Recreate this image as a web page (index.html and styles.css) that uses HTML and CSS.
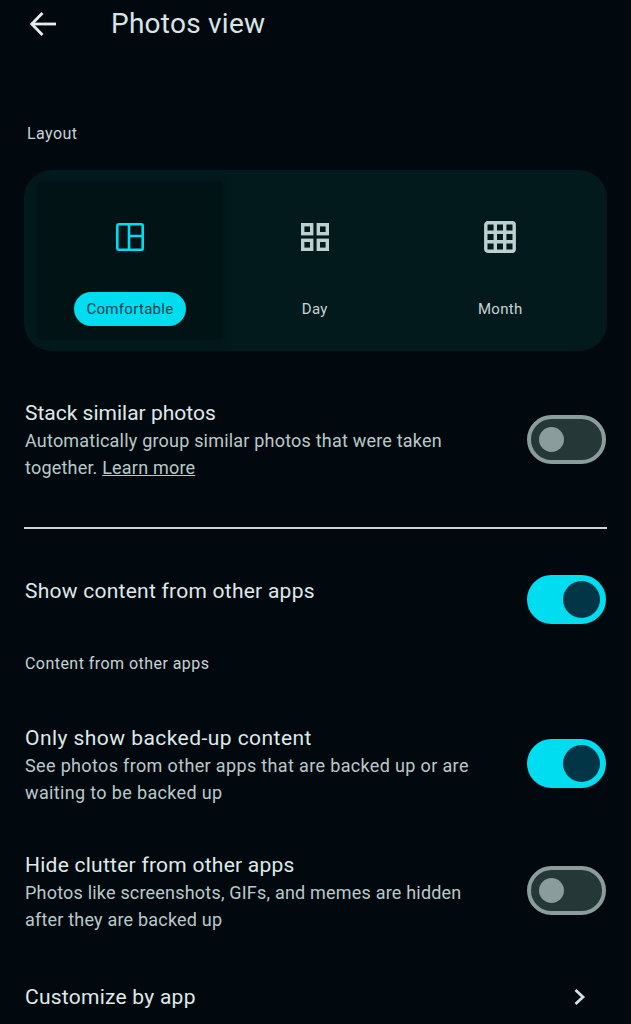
FILE: index.html
```html
<!DOCTYPE html>
<html lang="en">
<head>
    <meta charset="UTF-8">
    <meta name="viewport" content="width=device-width, initial-scale=1.0">
    <title>Photos view</title>
    <link rel="stylesheet" href="styles.css">
</head>
<body>
    <div class="topbar">
        <svg class="back" width="28" height="28" viewBox="0 0 28 28" fill="none" stroke="#e4eeee" stroke-width="2.8">
            <path d="M27 14H3"/>
            <path d="M13.5 3L2.8 14l10.7 11"/>
        </svg>
        <h1>Photos view</h1>
    </div>

    <div class="section-label first">Layout</div>

    <div class="layout-card">
        <div class="layout-option selected">
            <svg class="option-icon" width="32" height="32" viewBox="-1 -1 32 32" fill="none" stroke="#00dcf0" stroke-width="2.6">
                <rect x="2.3" y="2.3" width="25.4" height="25.4" rx="1.5"/>
                <path d="M14 2.3v25.4M14 14h13.7"/>
            </svg>
            <span class="pill">Comfortable</span>
        </div>
        <div class="layout-option">
            <svg class="option-icon" width="32" height="32" viewBox="-1 -1 32 32" fill="none" stroke="#bdd0d0" stroke-width="3.4">
                <rect x="2.7" y="2.7" width="9" height="9"/>
                <rect x="18.3" y="2.7" width="9" height="9"/>
                <rect x="2.7" y="18.3" width="9" height="9"/>
                <rect x="18.3" y="18.3" width="9" height="9"/>
            </svg>
            <span class="option-label">Day</span>
        </div>
        <div class="layout-option">
            <svg class="option-icon" width="32" height="32" viewBox="0 0 32 32" fill="none" stroke="#bdd0d0" stroke-width="3.4">
                <rect x="1.8" y="1.8" width="28.4" height="28.4" rx="2"/>
                <path d="M11.3 2v28M20.7 2v28M2 11.3h28M2 20.7h28"/>
            </svg>
            <span class="option-label">Month</span>
        </div>
    </div>

    <div class="row stack">
        <div class="row-text">
            <div class="row-title">Stack similar photos</div>
            <div class="row-sub">Automatically group similar photos that were taken<br>together. <a href="#">Learn more</a></div>
        </div>
        <div class="switch"><span class="knob"></span></div>
    </div>

    <hr class="divider">

    <div class="row show-content">
        <div class="row-text">
            <div class="row-title">Show content from other apps</div>
        </div>
        <div class="switch on"><span class="knob"></span></div>
    </div>

    <div class="section-label apps">Content from other apps</div>

    <div class="row backed-up">
        <div class="row-text">
            <div class="row-title">Only show backed-up content</div>
            <div class="row-sub">See photos from other apps that are backed up or are<br>waiting to be backed up</div>
        </div>
        <div class="switch on"><span class="knob"></span></div>
    </div>

    <div class="row clutter">
        <div class="row-text">
            <div class="row-title">Hide clutter from other apps</div>
            <div class="row-sub">Photos like screenshots, GIFs, and memes are hidden<br>after they are backed up</div>
        </div>
        <div class="switch"><span class="knob"></span></div>
    </div>

    <div class="row customize">
        <div class="row-title">Customize by app</div>
        <svg class="chevron" width="14" height="18" viewBox="0 0 14 18" fill="none" stroke="#d5e2e2" stroke-width="2.8">
            <path d="M2.5 2l7.5 7-7.5 7"/>
        </svg>
    </div>
</body>
</html>
```

FILE: styles.css
```css
html, body {
    height: 1024px;
    overflow: hidden;
}
body {
    font-family: Roboto, Arial, sans-serif;
    margin: 0;
    padding: 0 24px 0 25px;
    background-color: #01090f;
    color: #dfe9e9;
}
.topbar {
    display: flex;
    align-items: center;
    height: 48px;
}
.back {
    margin-left: 4px;
}
.topbar h1 {
    margin: -2px 0 0 54px;
    font-size: 28px;
    font-weight: 400;
    letter-spacing: 0.25px;
    color: #d9e5e5;
}
.section-label {
    font-size: 16px;
    line-height: 20px;
    letter-spacing: 0.45px;
    color: #c5d4d4;
}
.section-label.first {
    margin: 76px 0 0 2px;
}
.section-label.apps {
    margin-top: 30px;
}
.layout-card {
    display: grid;
    grid-template-columns: 184px 1fr 1fr;
    margin: 26px 0 0 -1px;
    height: 181px;
    padding: 12px 14px;
    box-sizing: border-box;
    background-color: #031a1c;
    border-radius: 28px;
}
.layout-option {
    display: flex;
    flex-direction: column;
    align-items: center;
    padding-top: 39px;
}
.layout-option.selected {
    background-color: #021316;
    box-shadow: 0 0 6px #021316;
}
.option-icon {
    flex: none;
}
.pill, .option-label {
    font-size: 15px;
    line-height: 34px;
    letter-spacing: 0.3px;
    margin-top: 39px;
}
.pill {
    padding: 0 12px;
    border-radius: 17px;
    background-color: #00dcf0;
    color: #04414f;
}
.option-label {
    color: #c5d4d4;
}
.row {
    display: flex;
    justify-content: space-between;
    align-items: flex-start;
}
.row-title {
    font-size: 21px;
    line-height: 28px;
    letter-spacing: 0.25px;
    color: #dfe9e9;
}
.row-sub {
    font-size: 18px;
    line-height: 27px;
    letter-spacing: 0.2px;
    color: #b9c9c9;
}
.row-sub a {
    color: #b9c9c9;
}
.switch {
    flex: none;
    width: 79px;
    height: 49px;
    margin-right: 1px;
    box-sizing: border-box;
    display: flex;
    align-items: center;
    padding-left: 8px;
    border: 4px solid #8a9c9c;
    border-radius: 25px;
    background-color: #263737;
}
.knob {
    width: 25px;
    height: 25px;
    border-radius: 50%;
    background-color: #8a9c9c;
}
.switch.on {
    justify-content: flex-end;
    padding: 0 2px 0 0;
    border-color: #00dcf0;
    background-color: #00dcf0;
}
.switch.on .knob {
    width: 37px;
    height: 37px;
    background-color: #023646;
}
.stack {
    margin-top: 48px;
}
.stack .row-title {
    letter-spacing: 0;
}
.stack .switch {
    margin-top: 16px;
}
.divider {
    margin: 46px 0 0 -1px;
    border: none;
    height: 2px;
    background-color: #ccd6d6;
}
.show-content {
    margin-top: 46px;
}
.show-content .row-title {
    margin-top: 2px;
}
.backed-up {
    margin-top: 50px;
}
.backed-up .row-title {
    letter-spacing: 0.45px;
}
.backed-up .row-sub {
    letter-spacing: 0.35px;
}
.backed-up .switch, .clutter .switch {
    margin-top: 15px;
}
.clutter {
    margin-top: 45px;
}
.customize {
    margin-top: 50px;
    align-items: center;
}
.chevron {
    margin-right: 20px;
}
```
